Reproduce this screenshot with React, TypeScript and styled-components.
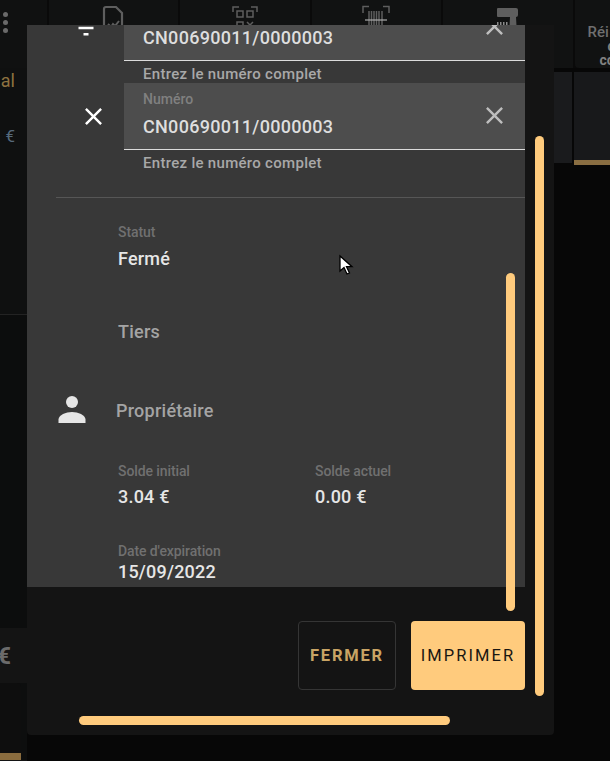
import React from "react";
import styled, { createGlobalStyle } from "styled-components";

const Global = createGlobalStyle`
  html, body { margin: 0; padding: 0; background: #070707; }
  * { box-sizing: border-box; }
  body { font-family: Roboto, "Liberation Sans", sans-serif; }
`;

const Page = styled.div`
  position: relative;
  width: 610px;
  height: 761px;
  overflow: hidden;
  background: #070707;
`;

/* ---------- backdrop application ---------- */
const TopBar = styled.div`
  display: flex;
  height: 68px;
  gap: 2px;
  background: #0a0a0a;
`;
const MenuTile = styled.div`
  width: 46.5px;
  flex: none;
  background: #101111;
  padding: 12px 0 0 3px;
  display: flex;
  flex-direction: column;
  gap: 3px;
`;
const Dot = styled.span`
  width: 5px;
  height: 5px;
  border-radius: 50%;
  background: #6a6a6a;
`;
const ToolTile = styled.div`
  width: 129.5px;
  flex: none;
  background: #111212;
  display: flex;
  justify-content: center;
  padding-top: 5px;
  color: #5e5e5e;
`;
const TextTile = styled.div`
  flex: 1;
  min-width: 0;
  overflow: hidden;
  background: #111212;
  border-radius: 0 0 0 4px;
  padding: 25px 0 0 13px;
  white-space: nowrap;
`;
const TileLine = styled.div<{ $indent: number; $strong?: boolean }>`
  padding-left: ${(p) => p.$indent}px;
  line-height: 14px;
  color: ${(p) => (p.$strong ? "#808080" : "#6f6f6f")};
  font-size: ${(p) => (p.$strong ? 14 : 15)}px;
  font-weight: ${(p) => (p.$strong ? 700 : 500)};
`;
const Body = styled.div`
  display: flex;
  height: 693px;
`;
const LeftRail = styled.div`
  width: 27px;
  flex: none;
  display: flex;
  flex-direction: column;
  background: #0d0e0e;
  overflow: hidden;
`;
const RailTop = styled.div`
  height: 247px;
  border-bottom: 1px solid #232323;
  background: #0f1010;
  display: flex;
  flex-direction: column;
  align-items: flex-end;
  padding: 1px 12px 0 0;
`;
const RailTitle = styled.div`
  font-size: 18px;
  line-height: 24px;
  color: #8e7240;
  display: flex;
  justify-content: flex-end;
  width: 15px;
  white-space: nowrap;
`;
const RailEuro = styled.div`
  margin-top: 33px;
  font-size: 17px;
  line-height: 20px;
  color: #566a7c;
`;
const RailSpacer = styled.div`
  height: 313px;
  background: #0c0d0d;
`;
const RailTotal = styled.div`
  height: 55px;
  background: #141414;
  display: flex;
  align-items: center;
  justify-content: flex-end;
  padding-right: 16px;
  font-size: 24px;
  font-weight: 700;
  color: #6b6b6b;
`;
const RailCard = styled.div`
  width: 21px;
  height: 77px;
  background: #0e0e0e;
  border-radius: 0 4px 0 0;
  border-bottom: 7px solid #8a6c3e;
`;
const RailFoot = styled.div`
  flex: 1;
  background: #141414;
`;
const Middle = styled.div`
  width: 416px;
  flex: none;
`;
const PanelRow = styled.div`
  flex: 1;
  min-width: 0;
  display: flex;
  gap: 2px;
  padding-top: 4px;
  height: 99px;
`;
const ActionPanel = styled.div`
  width: 129px;
  flex: none;
  height: 91px;
  background: #1a1b1d;
  display: flex;
  align-items: center;
  justify-content: center;
  padding-top: 40px;
  font-size: 16px;
  font-weight: 500;
  letter-spacing: 0.3px;
  color: #565656;
`;
const GoldPanel = styled.div`
  flex: 1;
  height: 93px;
  background: #18191b;
  border-bottom: 5px solid #8a6e42;
`;

/* ---------- dialog ---------- */
const Dialog = styled.div`
  position: absolute;
  left: 27px;
  top: 25px;
  width: 527px;
  height: 710px;
  background: #141414;
  border-radius: 0 0 4px 4px;
  overflow: hidden;
`;
const Content = styled.div`
  width: 498px;
  height: 562px;
  background: #383838;
  overflow: hidden;
`;
const Scrolled = styled.div`
  margin-top: -31px;
`;
const FieldRow = styled.div`
  display: grid;
  grid-template-columns: 97px 1fr;
`;
const RowIcon = styled.div<{ $inset: number }>`
  height: 67px;
  padding-left: ${(p) => p.$inset}px;
  display: flex;
  align-items: center;
  color: #fff;
`;
const FieldColumn = styled.div`
  min-width: 0;
`;
const Field = styled.div`
  height: 67px;
  background: #4d4d4d;
  border-bottom: 1px solid #dcdcdc;
  padding: 8px 22px 0 19px;
  display: flex;
  align-items: flex-start;
  justify-content: space-between;
`;
const FieldText = styled.div`
  display: flex;
  flex-direction: column;
`;
const FieldLabel = styled.div`
  font-size: 14px;
  line-height: 16px;
  font-weight: 500;
  color: #808080;
`;
const FieldValue = styled.div`
  margin-top: 8px;
  font-size: 18px;
  line-height: 24px;
  font-weight: 500;
  color: #dedede;
  letter-spacing: 0.3px;
`;
const ClearIcon = styled.span`
  display: flex;
  margin: 10px -6px 0 0;
  color: #bdbdbd;
`;
const Helper = styled.div`
  height: 22px;
  padding: 5px 0 0 19px;
  font-size: 15px;
  line-height: 16px;
  font-weight: 500;
  color: #a8a8a8;
  letter-spacing: 0.3px;
`;
const Divider = styled.div`
  height: 1px;
  margin: 25px 0 0 29px;
  background: #565656;
`;
const InfoBlock = styled.div<{ $top: number }>`
  margin-top: ${(p) => p.$top}px;
  padding-left: 91px;
`;
const InfoLabel = styled.div`
  font-size: 14px;
  line-height: 16px;
  font-weight: 500;
  letter-spacing: -0.1px;
  color: #707070;
`;
const InfoValue = styled.div<{ $gap: number }>`
  margin-top: ${(p) => p.$gap}px;
  font-size: 18px;
  line-height: 20px;
  font-weight: 500;
  letter-spacing: 0.2px;
  color: #e6e6e6;
`;
const SectionTitle = styled.div`
  font-size: 18px;
  line-height: 24px;
  font-weight: 500;
  letter-spacing: 0.25px;
  color: #a4a4a4;
`;
const OwnerRow = styled.div`
  margin-top: 51px;
  height: 28px;
  padding-left: 31px;
  display: flex;
  gap: 30px;
  color: #e6e6e6;
`;
const OwnerTitle = styled(SectionTitle)`
  margin-top: 4px;
`;
const BalanceGrid = styled.div`
  margin-top: 40px;
  padding-left: 91px;
  display: grid;
  grid-template-columns: 197px 1fr;
`;
const Footer = styled.div`
  display: flex;
  justify-content: flex-end;
  gap: 15px;
  padding: 34px 29px 0 0;
`;
const OutlineButton = styled.button`
  width: 98px;
  height: 69px;
  background: transparent;
  border: 1px solid #353535;
  border-radius: 4px;
  font-family: Roboto, "Liberation Sans", sans-serif;
  font-size: 16.500px;
  font-weight: 700;
  letter-spacing: 1.800px;
  color: #c9a464;
  padding: 0;
`;
const SolidButton = styled.button`
  width: 114px;
  height: 69px;
  background: #ffcb7d;
  border: 0;
  border-radius: 4px;
  font-family: Roboto, "Liberation Sans", sans-serif;
  font-size: 16.500px;
  font-weight: 400;
  letter-spacing: 2.100px;
  color: #1a1712;
  padding: 0;
`;

/* ---------- overlays: scrollbars and pointer ---------- */
const Thumb = styled.div<{ $x: number; $y: number; $w: number; $h: number }>`
  position: absolute;
  left: ${(p) => p.$x}px;
  top: ${(p) => p.$y}px;
  width: ${(p) => p.$w}px;
  height: ${(p) => p.$h}px;
  border-radius: 5px;
  background: #ffcb7d;
`;
const Pointer = styled.svg`
  position: absolute;
  left: 338px;
  top: 254px;
`;

const CloseGlyph = ({ size }: { size: number }) => (
  <svg width={size} height={size} viewBox="0 0 24 24" fill="currentColor">
    <path d="M19 6.41 17.59 5 12 10.59 6.41 5 5 6.41 10.59 12 5 17.59 6.41 19 12 13.41 17.59 19 19 17.59 13.41 12z" />
  </svg>
);
const FilterGlyph = () => (
  <svg width="30" height="30" viewBox="0 0 24 24" fill="currentColor">
    <path d="M3 6h18v2H3zM6 11h12v2H6zM10 16h4v2h-4z" />
  </svg>
);
const PersonGlyph = () => (
  <svg width="28" height="28" viewBox="0 0 28 28" fill="currentColor">
    <circle cx="14" cy="7" r="6" />
    <path d="M0.5 28v-3.5C0.5 20 8 17 14 17s13.500 3 13.500 7.500V28z" />
  </svg>
);
const FileIcon = () => (
  <svg width="22" height="30" viewBox="0 0 22 30" fill="none" stroke="currentColor" strokeWidth="2.200">
    <path d="M2 28V4q0-2 2-2h10l6 6v20" />
    <path d="M6 19l3 3 2-3 2 2 4-5" strokeWidth="2" />
  </svg>
);
const QrIcon = () => (
  <svg width="26" height="30" viewBox="0 0 26 30" fill="none" stroke="currentColor" strokeWidth="1.500">
    <path d="M1 7V2h6M19 2h6v5" />
    <rect x="5" y="6" width="6" height="6" />
    <rect x="15" y="6" width="6" height="6" />
    <rect x="5" y="17" width="6" height="6" />
    <path d="M15 17l6 6M21 17l-6 6" />
  </svg>
);
const BarcodeIcon = () => (
  <svg width="28" height="30" viewBox="0 0 28 30" fill="none" stroke="currentColor">
    <path d="M1 8V1.500h6M21 1.500h6V8" strokeWidth="1.500" />
    <path d="M7 6v16M9.500 6v16M12 6v16M14.500 6v16M17 6v16M20 6v16" strokeWidth="1.500" />
    <path d="M3 15h22" strokeWidth="1.200" stroke="#aaa" />
  </svg>
);
const ScannerIcon = () => (
  <svg width="24" height="30" viewBox="0 0 24 30" fill="currentColor">
    <path d="M1 4q0-1 1-1h18q2 0 2 2v5q0 2-2 2l1 18h-8l1-18H2q-1 0-1-1z" />
    <path d="M1 17h1.500v8H1zM4 17h1.500v8H4zM7 17h1.500v8H7zM10 17h1.500v8H10z" fill="#8a8a8a" />
  </svg>
);
const PointerGlyph = () => (
  <Pointer width="16" height="22" viewBox="0 0 16 22">
    <path d="M2 2v15l4-3.500 3 6.500 2.500-1-3-6.300h5.500z" fill="#fff" stroke="#000" strokeWidth="1.300" />
  </Pointer>
);

const NumberField = () => (
  <FieldColumn>
    <Field>
      <FieldText>
        <FieldLabel>Numéro</FieldLabel>
        <FieldValue>CN00690011/0000003</FieldValue>
      </FieldText>
      <ClearIcon>
        <CloseGlyph size={29} />
      </ClearIcon>
    </Field>
    <Helper>Entrez le numéro complet</Helper>
  </FieldColumn>
);

export default function App() {
  return (
    <Page>
      <Global />
      <TopBar>
        <MenuTile>
          <Dot />
          <Dot />
          <Dot />
        </MenuTile>
        <ToolTile>
          <FileIcon />
        </ToolTile>
        <ToolTile>
          <QrIcon />
        </ToolTile>
        <ToolTile>
          <BarcodeIcon />
        </ToolTile>
        <ToolTile>
          <ScannerIcon />
        </ToolTile>
        <TextTile>
          <TileLine $indent={0}>Réi</TileLine>
          <TileLine $indent={20} $strong>c</TileLine>
          <TileLine $indent={12} $strong>co</TileLine>
        </TextTile>
      </TopBar>
      <Body>
        <LeftRail>
          <RailTop>
            <RailTitle>al</RailTitle>
            <RailEuro>€</RailEuro>
          </RailTop>
          <RailSpacer />
          <RailTotal>€</RailTotal>
          <RailCard />
          <RailFoot />
        </LeftRail>
        <Middle />
        <PanelRow>
          <ActionPanel>PAIEMENTS</ActionPanel>
          <GoldPanel />
        </PanelRow>
      </Body>

      <Dialog>
        <Content>
          <Scrolled>
            <FieldRow>
              <RowIcon $inset={44}>
                <FilterGlyph />
              </RowIcon>
              <NumberField />
            </FieldRow>
            <FieldRow>
              <RowIcon $inset={52}>
                <CloseGlyph size={29} />
              </RowIcon>
              <NumberField />
            </FieldRow>
            <Divider />
            <InfoBlock $top={26}>
              <InfoLabel>Statut</InfoLabel>
              <InfoValue $gap={9}>Fermé</InfoValue>
            </InfoBlock>
            <InfoBlock $top={51}>
              <SectionTitle>Tiers</SectionTitle>
            </InfoBlock>
            <OwnerRow>
              <PersonGlyph />
              <OwnerTitle>Propriétaire</OwnerTitle>
            </OwnerRow>
            <BalanceGrid>
              <div>
                <InfoLabel>Solde initial</InfoLabel>
                <InfoValue $gap={8}>3.04 €</InfoValue>
              </div>
              <div>
                <InfoLabel>Solde actuel</InfoLabel>
                <InfoValue $gap={8}>0.00 €</InfoValue>
              </div>
            </BalanceGrid>
            <InfoBlock $top={36}>
              <InfoLabel>Date d'expiration</InfoLabel>
              <InfoValue $gap={3}>15/09/2022</InfoValue>
            </InfoBlock>
          </Scrolled>
        </Content>
        <Footer>
          <OutlineButton>FERMER</OutlineButton>
          <SolidButton>IMPRIMER</SolidButton>
        </Footer>
      </Dialog>

      <Thumb $x={506} $y={273} $w={9} $h={338} />
      <Thumb $x={535} $y={136} $w={9} $h={560} />
      <Thumb $x={79} $y={716} $w={371} $h={9} />
      <PointerGlyph />
    </Page>
  );
}
